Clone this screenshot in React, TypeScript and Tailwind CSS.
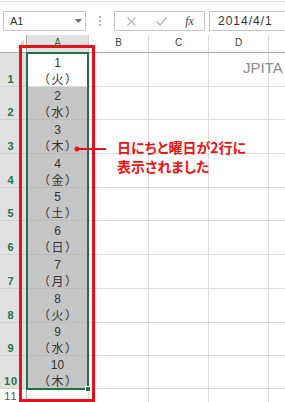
import React from 'react';

const rows = [
  { n: '1', d: '火' },
  { n: '2', d: '水' },
  { n: '3', d: '木' },
  { n: '4', d: '金' },
  { n: '5', d: '土' },
  { n: '6', d: '日' },
  { n: '7', d: '月' },
  { n: '8', d: '火' },
  { n: '9', d: '水' },
  { n: '10', d: '木' },
];

function GridCell() {
  return <div className="border-r border-b border-[#dadada] bg-white" />;
}

export default function App() {
  return (
    <div className="relative w-[285px] h-[402px] overflow-hidden bg-white font-['Liberation_Sans','Noto_Sans_CJK_JP',sans-serif] text-[#333]">
      {/* ribbon edge */}
      <div className="mt-px h-px bg-[#d9d9d9]" />
      {/* formula bar */}
      <div className="mt-[9px] mb-[4px] flex h-[20px] items-stretch">
        <div className="ml-[3px] flex w-[83px] items-center justify-between border border-[#c6c6c6] pl-[6px] pr-[3px]">
          <span className="text-[11px] leading-none text-[#333]">A1</span>
          <svg width="7" height="4" viewBox="0 0 7 4">
            <path d="M0 0 L7 0 L3.5 4 Z" fill="#6b6b6b" />
          </svg>
        </div>
        <div className="flex w-[28px] flex-col items-center justify-center gap-[2px]">
          <div className="h-[2px] w-[2px] bg-[#b5b5b5]" />
          <div className="h-[2px] w-[2px] bg-[#b5b5b5]" />
          <div className="h-[2px] w-[2px] bg-[#b5b5b5]" />
        </div>
        <div className="flex w-[91px] items-center border border-[#c6c6c6]">
          <div className="flex w-[30px] justify-center pl-[2px]">
            <svg width="9" height="9" viewBox="0 0 9 9">
              <path d="M0.5 0.5 L8.5 8.5 M8.5 0.5 L0.5 8.5" stroke="#b4b4b4" strokeWidth="1.1" fill="none" />
            </svg>
          </div>
          <div className="flex w-[30px] justify-center pl-[2px]">
            <svg width="11" height="9" viewBox="0 0 11 9">
              <path d="M0.5 4.5 L4 8 L10.5 0.5" stroke="#b4b4b4" strokeWidth="1.2" fill="none" />
            </svg>
          </div>
          <div className="flex w-[29px] justify-center">
            <span className="font-['Liberation_Serif',serif] text-[12px] italic leading-none text-[#444]">fx</span>
          </div>
        </div>
        <div className="ml-[4px] flex flex-1 items-center border-y border-l border-[#c6c6c6] pl-[8px]">
          <span className="text-[12px] leading-none tracking-[1px] text-[#333]">2014/4/1</span>
        </div>
      </div>

      {/* sheet grid */}
      <div className="grid grid-cols-[27px_62px_60px_60px_60px_16px] grid-rows-[18px_34px_33px_34px_34px_33px_34px_34px_34px_33px_33px_20px]">
        {/* header row */}
        <div className="relative border-r border-b border-[#ababab] bg-white">
          <svg className="absolute right-[2px] bottom-[4px]" width="8" height="8" viewBox="0 0 8 8">
            <path d="M8 0 L8 8 L0 8 Z" fill="#d5d5d5" />
          </svg>
        </div>
        <div className="flex justify-center border-r border-b border-r-[#d0d0d0] border-b-[#ababab] bg-[#e1e1e1] pt-[2px] text-[10px] leading-[12px] text-[#217346]">
          A
        </div>
        <div className="flex justify-center border-r border-b border-r-[#dadada] border-b-[#ababab] bg-white pt-[2px] text-[10px] leading-[12px] text-[#444]">
          B
        </div>
        <div className="flex justify-center border-r border-b border-r-[#dadada] border-b-[#ababab] bg-white pt-[2px] text-[10px] leading-[12px] text-[#444]">
          C
        </div>
        <div className="flex justify-center border-r border-b border-r-[#dadada] border-b-[#ababab] bg-white pt-[2px] text-[10px] leading-[12px] text-[#444]">
          D
        </div>
        <div className="border-b border-[#ababab] bg-white" />

        {rows.map((r, i) => (
          <React.Fragment key={r.n}>
            <div className="flex items-end justify-center border-r border-b border-r-[#ababab] border-b-[#d0d0d0] bg-[#e1e1e1] pr-[4px] pb-px text-[11px] font-bold leading-[12px] tracking-[1px] text-[#217346]">
              {r.n}
            </div>
            <div
              className={
                i === 0
                  ? 'flex flex-col items-center justify-end border-r border-b border-[#dadada] bg-white text-[12px] leading-[15px] text-[#333]'
                  : 'flex flex-col items-center justify-end border-r border-b border-[#bcbcbc] bg-[#c6c6c6] text-[12px] leading-[15px] text-[#333]'
              }
            >
              <span>{r.n}</span>
              <span className="pl-[2px] font-['Noto_Sans_CJK_JP',sans-serif] tracking-[2px] [font-feature-settings:'palt']">（{r.d}）</span>
            </div>
            <GridCell />
            <GridCell />
            <GridCell />
            <div className="border-b border-[#dadada] bg-white" />
          </React.Fragment>
        ))}

        <div className="flex items-start justify-center border-r border-r-[#ababab] bg-white pr-[4px] pt-px text-[11px] leading-[12px] tracking-[1px] text-[#555]">
          11
        </div>
        <div className="border-r border-[#dadada]" />
        <div className="border-r border-[#dadada]" />
        <div className="border-r border-[#dadada]" />
        <div className="border-r border-[#dadada]" />
        <div />
      </div>

      {/* watermark text */}
      <div className="absolute left-[243px] top-[59px] text-[15px] leading-[17px] text-[#8c8c8c]">JPITA</div>

      {/* selection border */}
      <div className="absolute left-[26px] top-[52px] h-[338px] w-[63px] border-2 border-[#217346]" />
      <div className="absolute left-[85px] top-[386px] h-[6px] w-[6px] border border-white bg-[#217346]" />

      {/* red highlight */}
      <div className="absolute left-[19px] top-[45px] h-[357px] w-[76px] border-[3px] border-[#e8101a]" />

      {/* arrow */}
      <svg className="absolute left-[73px] top-[145px]" width="33" height="8" viewBox="0 0 33 8">
        <circle cx="4" cy="4" r="2.5" fill="#e8101a" />
        <line x1="4" y1="4" x2="33" y2="4" stroke="#e8101a" strokeWidth="2" />
      </svg>

      {/* annotation */}
      <div className="absolute left-[117px] top-[138px] font-['Noto_Sans_CJK_JP',sans-serif] text-[14px] font-bold leading-[19px] text-[#ee1111] [font-feature-settings:'palt']">
        <div>日にちと曜日が2行に</div>
        <div>表示されました</div>
      </div>
    </div>
  );
}
